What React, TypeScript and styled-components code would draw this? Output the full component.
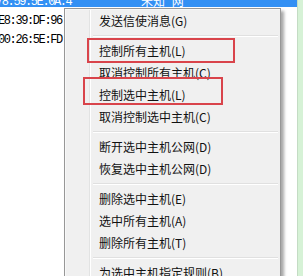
import React from "react";
import styled, { createGlobalStyle } from "styled-components";

const Global = createGlobalStyle`
  html, body { margin: 0; padding: 0; background: #ffffff; overflow: hidden; }
  #root { width: 303px; height: 276px; }
`;

const Page = styled.div`
  position: relative;
  width: 303px;
  height: 276px;
  overflow: hidden;
  display: flex;
  background: #ffffff;
`;

const ListView = styled.div`
  width: 297px;
  display: flex;
  flex-direction: column;
  margin-top: -12px;
  overflow: hidden;
`;

const Row = styled.div<{ $selected?: boolean }>`
  height: 19px;
  flex: 0 0 19px;
  display: flex;
  align-items: flex-end;
  background: ${(p) => (p.$selected ? "#3390f4" : "transparent")};
  color: ${(p) => (p.$selected ? "#ffffff" : "#000000")};
  white-space: nowrap;
`;

const MacCell = styled.span<{ $shift: number }>`
  font-family: "Liberation Mono", monospace;
  font-size: 12px;
  line-height: 14px;
  letter-spacing: -1.4px;
  width: 145px;
  flex: 0 0 145px;
  margin-left: ${(p) => p.$shift}px;
  margin-bottom: -2px;
`;

const NameCell = styled.span`
  font-family: "Noto Sans CJK SC", sans-serif;
  font-size: 12px;
  line-height: 16px;
  margin-bottom: -2px;
  word-spacing: 4px;
`;

const SidePanel = styled.div`
  flex: 1;
  background: #d6f2d6;
  border-left: 1px solid #c4dcc4;
`;

const Menu = styled.div`
  position: absolute;
  left: 64px;
  top: 8px;
  width: 211px;
  height: 300px;
  padding: 1px 2px 2px 2px;
  background: #f0f0f0;
  border: 1px solid #979797;
  box-shadow: inset 1px 1px 0 #f8f8f8, 3px 3px 3px rgba(0, 0, 0, 0.35);
  font-family: "Noto Sans CJK SC", "Microsoft YaHei", sans-serif;
  font-size: 12px;
  color: #111111;
  &::before {
    content: "";
    position: absolute;
    left: 24px;
    top: 1px;
    bottom: 0;
    width: 1px;
    background: #e2e3e3;
  }
  &::after {
    content: "";
    position: absolute;
    left: 25px;
    top: 1px;
    bottom: 0;
    width: 1px;
    background: #ffffff;
  }
`;

const Item = styled.div`
  height: 22px;
  display: flex;
  align-items: center;
  padding-left: 32px;
  white-space: nowrap;
  line-height: 22px;
`;

const Separator = styled.div`
  height: 8px;
  display: flex;
  flex-direction: column;
  justify-content: center;
  padding-left: 26px;
  &::before {
    content: "";
    display: block;
    height: 1px;
    background: #e0e0e0;
  }
  &::after {
    content: "";
    display: block;
    height: 1px;
    background: #ffffff;
  }
`;

const Highlight = styled.div<{ $l: number; $t: number; $w: number; $h: number }>`
  position: absolute;
  left: ${(p) => p.$l}px;
  top: ${(p) => p.$t}px;
  width: ${(p) => p.$w}px;
  height: ${(p) => p.$h}px;
  box-sizing: border-box;
  border: 2px solid #d9444b;
  pointer-events: none;
`;

type Entry = { label?: string; sep?: boolean };

const entries: Entry[] = [
  { label: "发送信使消息(G)" },
  { sep: true },
  { label: "控制所有主机(L)" },
  { label: "取消控制所有主机(C)" },
  { label: "控制选中主机(L)" },
  { label: "取消控制选中主机(C)" },
  { sep: true },
  { label: "断开选中主机公网(D)" },
  { label: "恢复选中主机公网(D)" },
  { sep: true },
  { label: "删除选中主机(E)" },
  { label: "选中所有主机(A)" },
  { label: "删除所有主机(T)" },
  { sep: true },
  { label: "为选中主机指定规则(B)" },
];

export default function App() {
  return (
    <>
      <Global />
      <Page>
        <ListView>
          <Row $selected>
            <MacCell $shift={-4}>78:59:5E:0A:4</MacCell>
            <NameCell>未知 网</NameCell>
          </Row>
          <Row>
            <MacCell $shift={-2}>E8:39:DF:96</MacCell>
          </Row>
          <Row>
            <MacCell $shift={-2}>00:26:5E:FD</MacCell>
          </Row>
        </ListView>
        <SidePanel />
        <Menu>
          {entries.map((e, i) =>
            e.sep ? <Separator key={i} /> : <Item key={i}>{e.label}</Item>
          )}
        </Menu>
        <Highlight $l={87} $t={38} $w={148} $h={25} />
        <Highlight $l={83} $t={77} $w={140} $h={28} />
      </Page>
    </>
  );
}
